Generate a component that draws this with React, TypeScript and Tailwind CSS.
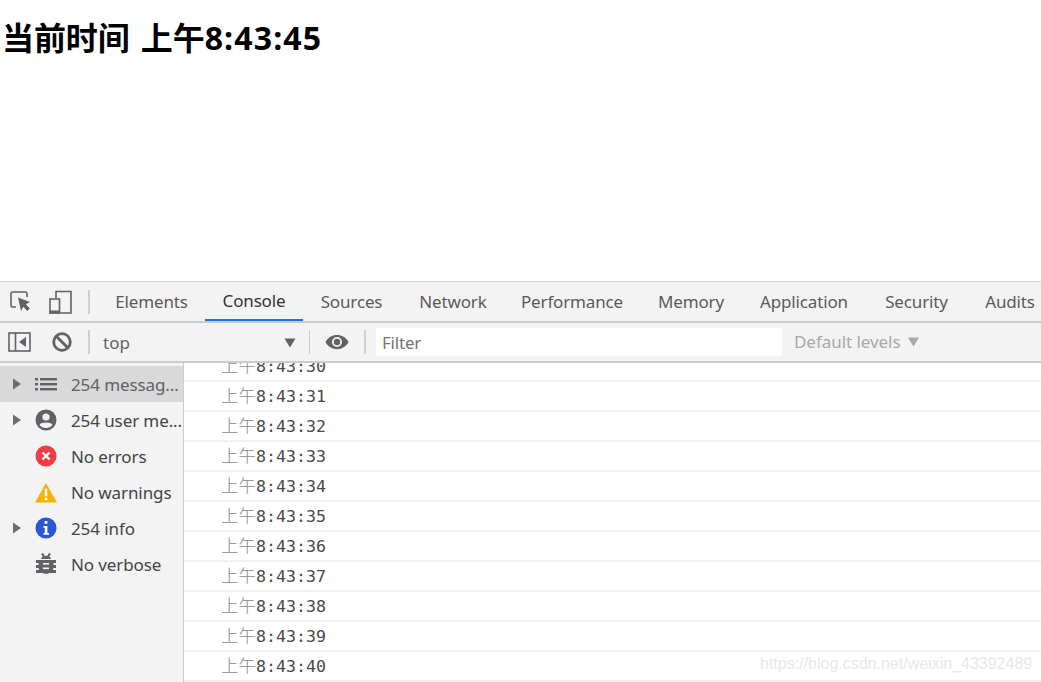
const UI = "font-['Noto_Sans','Open_Sans',sans-serif]";

const tabs = [
  { label: "Elements", w: "w-[107px]" },
  { label: "Console", w: "w-[98px]", active: true },
  { label: "Sources", w: "w-[97px]" },
  { label: "Network", w: "w-[106px]" },
  { label: "Performance", w: "w-[132px]" },
  { label: "Memory", w: "w-[106px]" },
  { label: "Application", w: "w-[120px]" },
  { label: "Security", w: "w-[105px]" },
  { label: "Audits", w: "w-[82px]" },
];

const times = ["30", "31", "32", "33", "34", "35", "36", "37", "38", "39", "40"];

function Arrow() {
  return (
    <svg width="10" height="12" viewBox="0 0 10 12" className="shrink-0">
      <path d="M1 0.5 L9 6 L1 11.5 Z" fill="#6e6e6e" />
    </svg>
  );
}

function ListIcon() {
  return (
    <svg width="22" height="14" viewBox="0 0 22 14" fill="#5f6368">
      <rect x="0" y="1" width="3" height="2.4" />
      <rect x="5" y="1" width="17" height="2.4" />
      <rect x="0" y="6" width="3" height="2.4" />
      <rect x="5" y="6" width="17" height="2.4" />
      <rect x="0" y="11" width="3" height="2.4" />
      <rect x="5" y="11" width="17" height="2.4" />
    </svg>
  );
}

function UserIcon() {
  return (
    <svg width="22" height="22" viewBox="0 0 22 22">
      <circle cx="11" cy="11" r="10.5" fill="#5f6368" />
      <circle cx="11" cy="8" r="3.6" fill="#f3f3f3" />
      <path d="M4.5 15.8 C6 12.8 16 12.8 17.5 15.8 C16 18 13.5 19 11 19 C8.5 19 6 18 4.5 15.8 Z" fill="#f3f3f3" />
    </svg>
  );
}

function ErrorIcon() {
  return (
    <svg width="22" height="22" viewBox="0 0 22 22">
      <circle cx="11" cy="11" r="10.5" fill="#ee3d47" />
      <path d="M7.5 7.5 L14.5 14.5 M14.5 7.5 L7.5 14.5" stroke="#fff" strokeWidth="2.4" />
    </svg>
  );
}

function WarnIcon() {
  return (
    <svg width="23" height="21" viewBox="0 0 23 21">
      <path d="M11.5 0.5 L23 21 L0 21 Z" fill="#f4b400" />
      <rect x="10.2" y="6.5" width="2.6" height="8" fill="#fff" />
      <rect x="10.2" y="16" width="2.6" height="2.6" fill="#fff" />
    </svg>
  );
}

function InfoIcon() {
  return (
    <svg width="22" height="22" viewBox="0 0 22 22">
      <circle cx="11" cy="11" r="10.5" fill="#2b56d6" />
      <rect x="9.6" y="4" width="2.8" height="2.8" fill="#fff" />
      <path d="M8.5 9 H12.4 V16 H14 V17.8 H8.5 V16 H9.8 V10.8 H8.5 Z" fill="#fff" />
    </svg>
  );
}

function BugIcon() {
  return (
    <svg width="20" height="22" viewBox="0 0 20 22" fill="#5f6368">
      <path d="M5 6 C5 1.5 15 1.5 15 6 Z" />
      <path d="M2.5 7 H17.5 V14 C17.5 23 2.5 23 2.5 14 Z" />
      <path d="M6 0.5 L8 3.5 M14 0.5 L12 3.5" stroke="#5f6368" strokeWidth="2.2" fill="none" />
      <rect x="0" y="7" width="20" height="3" />
      <rect x="0" y="12" width="20" height="3" />
      <rect x="0" y="17" width="20" height="3" />
      <rect x="7" y="10" width="6" height="1.6" fill="#f3f3f3" />
      <rect x="7" y="14.5" width="6" height="1.6" fill="#f3f3f3" />
    </svg>
  );
}

const sideItems = [
  { arrow: true, icon: <ListIcon />, label: "254 messag...", selected: true },
  { arrow: true, icon: <UserIcon />, label: "254 user me..." },
  { arrow: false, icon: <ErrorIcon />, label: "No errors" },
  { arrow: false, icon: <WarnIcon />, label: "No warnings" },
  { arrow: true, icon: <InfoIcon />, label: "254 info" },
  { arrow: false, icon: <BugIcon />, label: "No verbose" },
];

export default function App() {
  return (
    <div className="relative w-[1041px] h-[682px] overflow-hidden flex flex-col bg-white">
      <div className="h-[281px] shrink-0 pl-[2px] pt-[15px]">
        <h1 className="text-[32px] leading-[46px] font-bold text-black font-['Noto_Sans','Noto_Sans_CJK_SC',sans-serif] whitespace-nowrap [word-spacing:3px]">
          <span className="tracking-[-0.1px]">当前时间 上午</span>
          <span className="tracking-[1.15px]">8:43:45</span>
        </h1>
      </div>

      <div className={`h-[42px] shrink-0 flex items-stretch overflow-hidden bg-[#f3f3f3] border-t border-t-[#d0d0d0] border-b-2 border-b-[#cccccc] ${UI}`}>
        <div className="w-[98px] shrink-0 flex items-center pl-[10px]">
          <svg width="21" height="21" viewBox="0 0 21 21" fill="none" className="shrink-0">
            <path d="M6 16 H2.5 Q1 16 1 14.5 V2.5 Q1 1 2.5 1 H15.5 Q17 1 17 2.5 V6" stroke="#5f6368" strokeWidth="1.6" />
            <path d="M8 6.5 L20 11 L15.8 13.2 L19.8 17.5 L17.3 20 L13.3 15.7 L11 20 Z" fill="#5f6368" />
          </svg>
          <svg width="23" height="24" viewBox="0 0 23 24" fill="none" className="ml-[18px] shrink-0">
            <path d="M7 8 V1.5 H22 V23 H11" stroke="#5f6368" strokeWidth="1.6" />
            <rect x="1" y="9" width="9.5" height="14" stroke="#5f6368" strokeWidth="1.6" />
            <rect x="0.5" y="20.5" width="10.5" height="3" fill="#5f6368" />
          </svg>
          <div className="w-[2px] h-[24px] bg-[#cfcfcf] shrink-0 ml-[16px]" />
        </div>
        {tabs.map((t) => (
          <div
            key={t.label}
            className={`${t.w} shrink-0 flex items-center justify-center pt-[1px] text-[17px] tracking-[-0.15px] ${
              t.active
                ? "text-[#333333] border-b-2 border-b-[#1a73e8]"
                : "text-[#5a5a5a]"
            }`}
          >
            {t.label}
          </div>
        ))}
      </div>

      <div className={`h-[40px] shrink-0 flex items-center bg-[#f3f3f3] border-b-2 border-b-[#cccccc] ${UI}`}>
        <svg width="23" height="20" viewBox="0 0 23 20" fill="none" className="ml-[8px] shrink-0">
          <rect x="1" y="1" width="21" height="18" stroke="#5f6368" strokeWidth="1.6" />
          <path d="M7.5 1 V19" stroke="#5f6368" strokeWidth="1.6" />
          <path d="M18 5 V15 L11 10 Z" fill="#5f6368" />
        </svg>
        <svg width="20" height="20" viewBox="0 0 20 20" fill="none" className="ml-[21px] shrink-0">
          <circle cx="10" cy="10" r="8.3" stroke="#5f6368" strokeWidth="2.8" />
          <path d="M4 4 L16 16" stroke="#5f6368" strokeWidth="2.8" />
        </svg>
        <div className="w-[2px] h-[24px] bg-[#cfcfcf] shrink-0 ml-[16px]" />
        <div className="w-[207px] ml-[12px] shrink-0 flex items-center justify-between pr-[13px] pt-[2px] pl-[1px] text-[17px] text-[#5f6368]">
          <span>top</span>
          <svg width="12" height="10" viewBox="0 0 12 10">
            <path d="M0.5 0.5 H11.5 L6 9.5 Z" fill="#5f6368" />
          </svg>
        </div>
        <div className="w-[1px] h-[24px] bg-[#cfcfcf] shrink-0" />
        <svg width="24" height="16" viewBox="0 0 24 16" className="ml-[15px] shrink-0">
          <path d="M0.5 8 C5 -1.5 19 -1.5 23.5 8 C19 17.5 5 17.5 0.5 8 Z" fill="#5f6368" />
          <circle cx="12" cy="8" r="5" fill="#f3f3f3" />
          <circle cx="12" cy="8" r="3.2" fill="#5f6368" />
        </svg>
        <div className="w-[2px] h-[24px] bg-[#cfcfcf] shrink-0 ml-[15px]" />
        <div className="w-[406px] h-[28px] ml-[10px] shrink-0 bg-white flex items-center pl-[6px] pt-[2px] text-[17px] tracking-[-0.2px] text-[#757575]">
          Filter
        </div>
        <div className="ml-[12px] flex items-center gap-[7px] text-[17px] tracking-[-0.05px] text-[#a8a8a8] whitespace-nowrap">
          <span>Default levels</span>
          <svg width="11" height="10" viewBox="0 0 11 10">
            <path d="M0 0.5 H11 L5.5 9.5 Z" fill="#a8a8a8" />
          </svg>
        </div>
      </div>

      <div className="flex-1 min-h-0 flex">
        <div className={`w-[184px] shrink-0 bg-[#f3f3f3] border-r border-r-[#cccccc] pt-[3px] overflow-hidden ${UI}`}>
          {sideItems.map((s) => (
            <div
              key={s.label}
              className={`h-[36px] flex items-center text-[17px] tracking-[-0.1px] whitespace-nowrap ${
                s.selected ? "bg-[#d9d9d9] text-[#5f6368]" : "text-[#444444]"
              }`}
            >
              <div className="w-[35px] shrink-0 pl-[12px]">{s.arrow && <Arrow />}</div>
              <div className="w-[22px] shrink-0 flex justify-center">{s.icon}</div>
              <span className="ml-[14px] pt-[1px]">{s.label}</span>
            </div>
          ))}
        </div>
        <div className="flex-1 min-w-0 flex flex-col justify-end overflow-hidden bg-white">
          {times.map((t) => (
            <div
              key={t}
              className="h-[30px] shrink-0 flex items-center pl-[37px] pt-[2px] border-b-2 border-b-[#f0f0f0] text-[#4a4a4a] whitespace-nowrap"
            >
              <span className="text-[17.5px] -translate-y-[2px] font-light text-[#8a8a8a] font-['Noto_Sans_CJK_SC',serif]">上午</span>
              <span className="text-[16.6px] font-['DejaVu_Sans_Mono',monospace]">8:43:{t}</span>
            </div>
          ))}
        </div>
      </div>

      <div className="absolute left-[760px] top-[655px] text-[16px] leading-[18px] text-[#e8e8e8] font-['Liberation_Sans',sans-serif] whitespace-nowrap pointer-events-none">
        https://blog.csdn.net/weixin_43392489
      </div>
    </div>
  );
}
